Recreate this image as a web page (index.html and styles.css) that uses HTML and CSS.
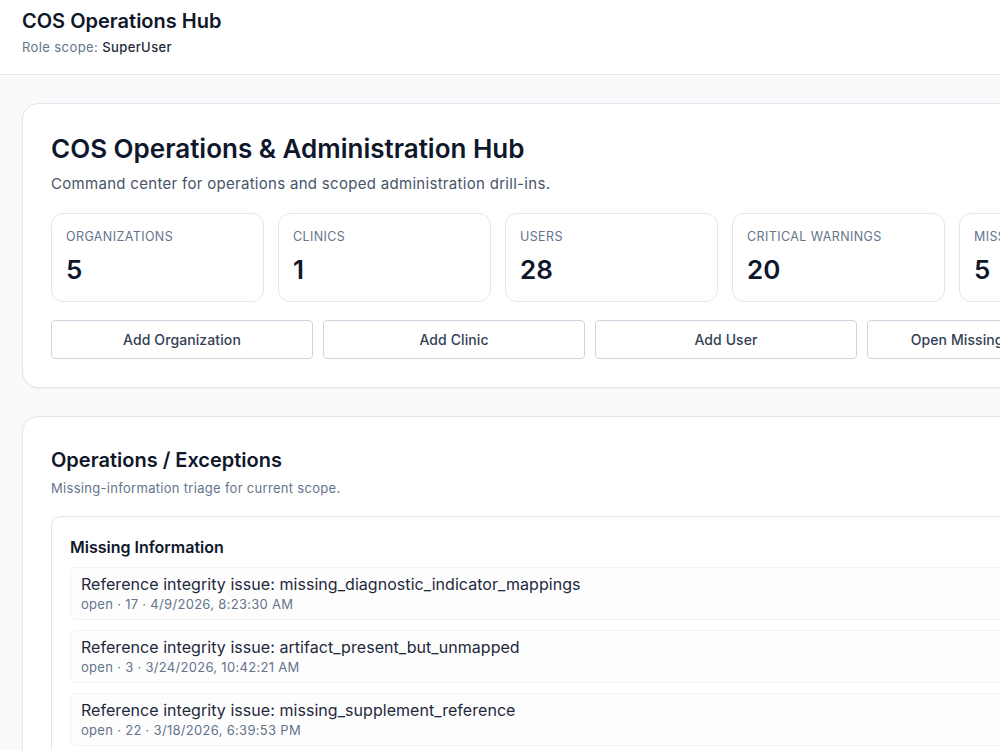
FILE: index.html
```html
<!DOCTYPE html>
<html lang="en">
<head>
<meta charset="UTF-8" />
<meta name="viewport" content="width=device-width, initial-scale=1" />
<title>COS Operations Hub</title>
<link rel="stylesheet" href="styles.css">
</head>
<body>
  <header class="topbar">
    <h1>COS Operations Hub</h1>
    <p class="scope">Role scope: <strong>SuperUser</strong></p>
  </header>

  <main class="page">
    <section class="card">
      <h2 class="hub-title">COS Operations &amp; Administration Hub</h2>
      <p class="hub-sub">Command center for operations and scoped administration drill-ins.</p>

      <div class="stats">
        <div class="stat"><span class="stat-label">Organizations</span><span class="stat-value">5</span></div>
        <div class="stat"><span class="stat-label">Clinics</span><span class="stat-value">1</span></div>
        <div class="stat"><span class="stat-label">Users</span><span class="stat-value">28</span></div>
        <div class="stat"><span class="stat-label">Critical Warnings</span><span class="stat-value">20</span></div>
        <div class="stat"><span class="stat-label">Missing Information</span><span class="stat-value">5</span></div>
      </div>

      <div class="actions">
        <button type="button">Add Organization</button>
        <button type="button">Add Clinic</button>
        <button type="button">Add User</button>
        <button type="button">Open Missing Information</button>
      </div>
    </section>

    <section class="card">
      <h2 class="section-title">Operations / Exceptions</h2>
      <p class="section-sub">Missing-information triage for current scope.</p>

      <div class="panel">
        <h3>Missing Information</h3>
        <ul class="issues">
          <li>
            <div class="issue-title">Reference integrity issue: missing_diagnostic_indicator_mappings</div>
            <div class="issue-meta">open · 17 · 4/9/2026, 8:23:30 AM</div>
          </li>
          <li>
            <div class="issue-title">Reference integrity issue: artifact_present_but_unmapped</div>
            <div class="issue-meta">open · 3 · 3/24/2026, 10:42:21 AM</div>
          </li>
          <li>
            <div class="issue-title">Reference integrity issue: missing_supplement_reference</div>
            <div class="issue-meta">open · 22 · 3/18/2026, 6:39:53 PM</div>
          </li>
          <li>
            <div class="issue-title">Reference integrity issue: orphaned_protocol_step</div>
            <div class="issue-meta">open · 4 · 3/11/2026, 2:15:08 PM</div>
          </li>
        </ul>
      </div>
    </section>
  </main>
</body>
</html>
```

FILE: styles.css
```css
/* Base */
* {
  box-sizing: border-box;
}
html, body {
  margin: 0;
  padding: 0;
  overflow: hidden;
}
body {
  font-family: Inter, 'Noto Sans', sans-serif;
  background: #f8fafc;
  color: #0f172a;
  width: 1230px;
}

/* Top bar */
.topbar {
  background: #fff;
  border-bottom: 1px solid #e5e7eb;
  padding: 7px 22px 17px;
}
.topbar h1 {
  margin: 0;
  font-size: 20px;
  line-height: 28px;
  font-weight: 600;
}
.scope {
  margin: 2px 0 0;
  font-size: 13px;
  line-height: 20px;
  letter-spacing: 0.4px;
  color: #64748b;
}
.scope strong {
  font-weight: 500;
  color: #1e293b;
}

/* Page */
.page {
  padding: 28px 22px;
  display: flex;
  flex-direction: column;
  gap: 28px;
}
.card {
  background: #fff;
  border: 1px solid #e5e7eb;
  border-radius: 16px;
  padding: 27px 28px 28px;
  box-shadow: 0 1px 2px rgba(15, 23, 42, 0.04);
}

/* Hub card */
.hub-title {
  margin: 0;
  font-size: 26px;
  line-height: 36px;
  font-weight: 600;
}
.hub-sub {
  margin: 6px 0 0;
  font-size: 15px;
  line-height: 22px;
  letter-spacing: 0.3px;
  color: #475569;
}
.stats {
  display: grid;
  grid-template-columns: repeat(5, 213px);
  gap: 14px;
  margin-top: 18px;
}
.stat {
  border: 1px solid #e2e8f0;
  border-radius: 12px;
  padding: 15px 14px;
  display: flex;
  flex-direction: column;
}
.stat-label {
  font-size: 12.5px;
  line-height: 16px;
  text-transform: uppercase;
  letter-spacing: 0.4px;
  color: #64748b;
  white-space: nowrap;
}
.stat-value {
  margin-top: 9px;
  font-size: 26px;
  line-height: 32px;
  font-weight: 600;
}
.actions {
  display: grid;
  grid-template-columns: repeat(4, 262px);
  gap: 10px;
  margin-top: 18px;
}
.actions button {
  height: 39px;
  background: #fff;
  border: 1px solid #cbd5e1;
  border-radius: 4px;
  font-family: inherit;
  font-size: 14px;
  font-weight: 500;
  letter-spacing: 0.1px;
  color: #334155;
  cursor: pointer;
  white-space: nowrap;
}

/* Exceptions card */
.section-title {
  margin: 0;
  font-size: 20px;
  line-height: 33px;
  font-weight: 600;
}
.section-sub {
  margin: 1px 0 0;
  font-size: 13px;
  line-height: 20px;
  letter-spacing: 0.3px;
  color: #64748b;
}
.panel {
  margin-top: 18px;
  border: 1px solid #e2e8f0;
  border-radius: 10px;
  padding: 18px;
}
.panel h3 {
  margin: 0;
  font-size: 16px;
  line-height: 24px;
  font-weight: 600;
}
.issues {
  list-style: none;
  margin: 8px 0 0;
  padding: 0;
  display: flex;
  flex-direction: column;
  gap: 10px;
}
.issues li {
  border: 1px solid #eef1f5;
  border-radius: 6px;
  background: #fdfdfe;
  padding: 5px 10px 6px;
}
.issue-title {
  font-size: 16px;
  line-height: 22px;
  letter-spacing: 0.05px;
  color: #1e293b;
}
.issue-meta {
  font-size: 13px;
  line-height: 18px;
  letter-spacing: 0.3px;
  color: #64748b;
}
```
